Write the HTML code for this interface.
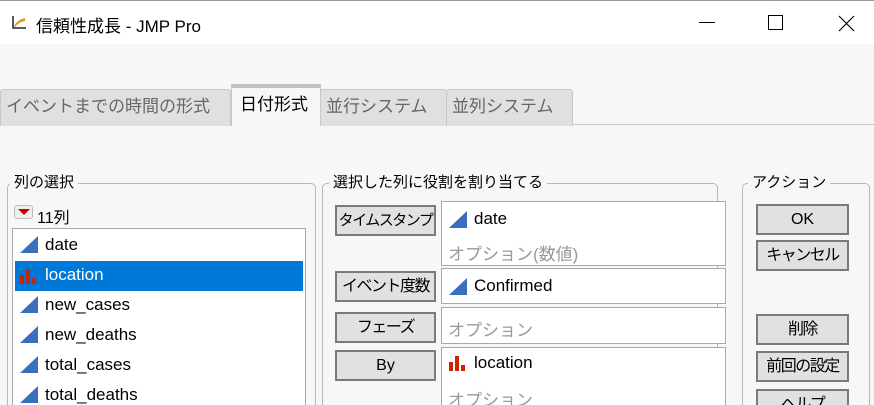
<!DOCTYPE html>
<html style="width:874px;height:405px;overflow:hidden"><head><meta charset="utf-8"><style>
*{box-sizing:border-box;margin:0;padding:0}
body{width:874px;height:405px;overflow:hidden;background:#f7f7f7;position:relative;font-family:"Liberation Sans","Noto Sans CJK JP",sans-serif;color:#000}
.a{position:absolute;white-space:nowrap}
.title{top:0;left:0;width:874px;height:44px;background:#fff;border-top:1px solid #999}
.tab{position:absolute;top:88px;height:37px;background:#e0e0e0;border:1px solid #c8c8c8;border-bottom:none;border-radius:3px 3px 0 0;color:#666;font-size:17px;line-height:32px;padding-left:5px;white-space:nowrap}
.grp{position:absolute;border:1px solid #b8b8b8;border-radius:5px}
.gt{position:absolute;background:#f7f7f7;font-size:15px;padding:0 4px;line-height:18px;white-space:nowrap}
.btn{position:absolute;background:#e1e1e1;border:2px solid #7a7a7a;font-size:16px;text-align:center;line-height:28px;white-space:nowrap;letter-spacing:-1.5px;overflow:hidden}
.box{position:absolute;background:#fff;border:1px solid #a8a8a8}
.tri{display:inline-block;width:0;height:0;border-left:18px solid transparent;border-bottom:17px solid #3a6fc0;position:absolute}
.ti{position:absolute;font-size:17px;white-space:nowrap}
.gray{color:#999}
</style></head><body>
<div class="a title"></div>
<svg class="a" style="left:11px;top:14px" width="16" height="16"><path d="M2 2V14H15" stroke="#223" stroke-width="1.5" fill="none"/><path d="M3 12Q6 6 14 4L14 7Q8 8 4 13Z" fill="#d4a020"/></svg>
<div class="a" style="left:36px;top:12px;font-size:17px">信頼性成長 - JMP Pro</div>
<div class="a" style="left:699px;top:22px;width:16px;height:1px;background:#000"></div>
<div class="a" style="left:768px;top:15px;width:15px;height:15px;border:1px solid #000"></div>
<svg class="a" style="left:838px;top:15px" width="17" height="17"><path d="M1 1L16 16M16 1L1 16" stroke="#000" stroke-width="1.2"/></svg>

<div class="a" style="left:0;top:124px;width:874px;height:1px;background:#c8c8c8"></div>
<div class="tab" style="left:0;width:231px;top:89px;line-height:30px;padding-top:2px">イベントまでの時間の形式</div>
<div class="tab" style="left:320px;width:127px;top:89px;line-height:30px;padding-top:2px">並行システム</div>
<div class="tab" style="left:446px;width:127px;top:89px;line-height:30px;padding-top:2px">並列システム</div>
<div class="a" style="left:231px;top:84px;width:90px;height:42px;background:#f7f7f7;border:1px solid #c8c8c8;border-top:4px solid #c0c0c0;border-bottom:none;font-size:17px;line-height:34px;padding-left:8px">日付形式</div>

<div class="grp" style="left:7px;top:183px;width:309px;height:240px"></div>
<div class="gt" style="left:10px;top:174px">列の選択</div>
<div class="a" style="left:14px;top:205px;width:19px;height:14px;background:#f0f0f0;border:1px solid #bbb;border-radius:3px"></div>
<div class="a" style="left:18px;top:209px;width:0;height:0;border-left:6px solid transparent;border-right:6px solid transparent;border-top:6px solid #c00"></div>
<div class="a" style="left:37px;top:204px;font-size:16px">11列</div>
<div class="box" style="left:12px;top:228px;width:294px;height:190px"></div>
<div class="a" style="left:15px;top:261px;width:288px;height:30px;background:#0078d7"></div>
<div class="tri" style="left:20px;top:236px"></div><div class="ti" style="left:45px;top:235px">date</div>
<svg class="a" style="left:19px;top:267px" width="20" height="18"><rect x="1" y="8" width="4" height="9" fill="#cc2200"/><rect x="7" y="2" width="4" height="15" fill="#cc2200"/><rect x="13" y="11" width="4" height="6" fill="#cc2200"/></svg>
<div class="ti" style="left:45px;top:265px;color:#fff">location</div>
<div class="tri" style="left:20px;top:296px"></div><div class="ti" style="left:45px;top:295px">new_cases</div>
<div class="tri" style="left:20px;top:326px"></div><div class="ti" style="left:45px;top:325px">new_deaths</div>
<div class="tri" style="left:20px;top:356px"></div><div class="ti" style="left:45px;top:355px">total_cases</div>
<div class="tri" style="left:20px;top:386px"></div><div class="ti" style="left:45px;top:385px">total_deaths</div>

<div class="grp" style="left:322px;top:183px;width:396px;height:240px"></div>
<div class="gt" style="left:329px;top:174px">選択した列に役割を割り当てる</div>
<div class="btn" style="left:335px;top:205px;width:101px;height:31px;font-size:15px;letter-spacing:-1.5px">タイムスタンプ</div>
<div class="box" style="left:441px;top:201px;width:285px;height:65px"></div>
<div class="tri" style="left:449px;top:211px"></div><div class="ti" style="left:474px;top:209px">date</div>
<div class="ti gray" style="left:448px;top:240px">オプション(数値)</div>
<div class="btn" style="left:335px;top:271px;width:101px;height:31px">イベント度数</div>
<div class="box" style="left:441px;top:268px;width:285px;height:36px"></div>
<div class="tri" style="left:449px;top:278px"></div><div class="ti" style="left:474px;top:276px">Confirmed</div>
<div class="btn" style="left:335px;top:312px;width:101px;height:31px">フェーズ</div>
<div class="box" style="left:441px;top:307px;width:285px;height:37px"></div>
<div class="ti gray" style="left:448px;top:316px">オプション</div>
<div class="btn" style="left:335px;top:350px;width:101px;height:31px;letter-spacing:0">By</div>
<div class="box" style="left:441px;top:347px;width:285px;height:70px"></div>
<svg class="a" style="left:448px;top:354px" width="20" height="18"><rect x="1" y="8" width="4" height="9" fill="#cc2200"/><rect x="7" y="2" width="4" height="15" fill="#cc2200"/><rect x="13" y="11" width="4" height="6" fill="#cc2200"/></svg>
<div class="ti" style="left:474px;top:353px">location</div>
<div class="ti gray" style="left:448px;top:386px">オプション</div>

<div class="grp" style="left:742px;top:183px;width:128px;height:240px"></div>
<div class="gt" style="left:748px;top:174px">アクション</div>
<div class="btn" style="left:756px;top:204px;width:93px;height:31px;letter-spacing:0">OK</div>
<div class="btn" style="left:756px;top:240px;width:93px;height:31px">キャンセル</div>
<div class="btn" style="left:756px;top:314px;width:93px;height:31px">削除</div>
<div class="btn" style="left:756px;top:351px;width:93px;height:31px">前回の設定</div>
<div class="btn" style="left:756px;top:389px;width:93px;height:31px">ヘルプ</div>
</body></html>
